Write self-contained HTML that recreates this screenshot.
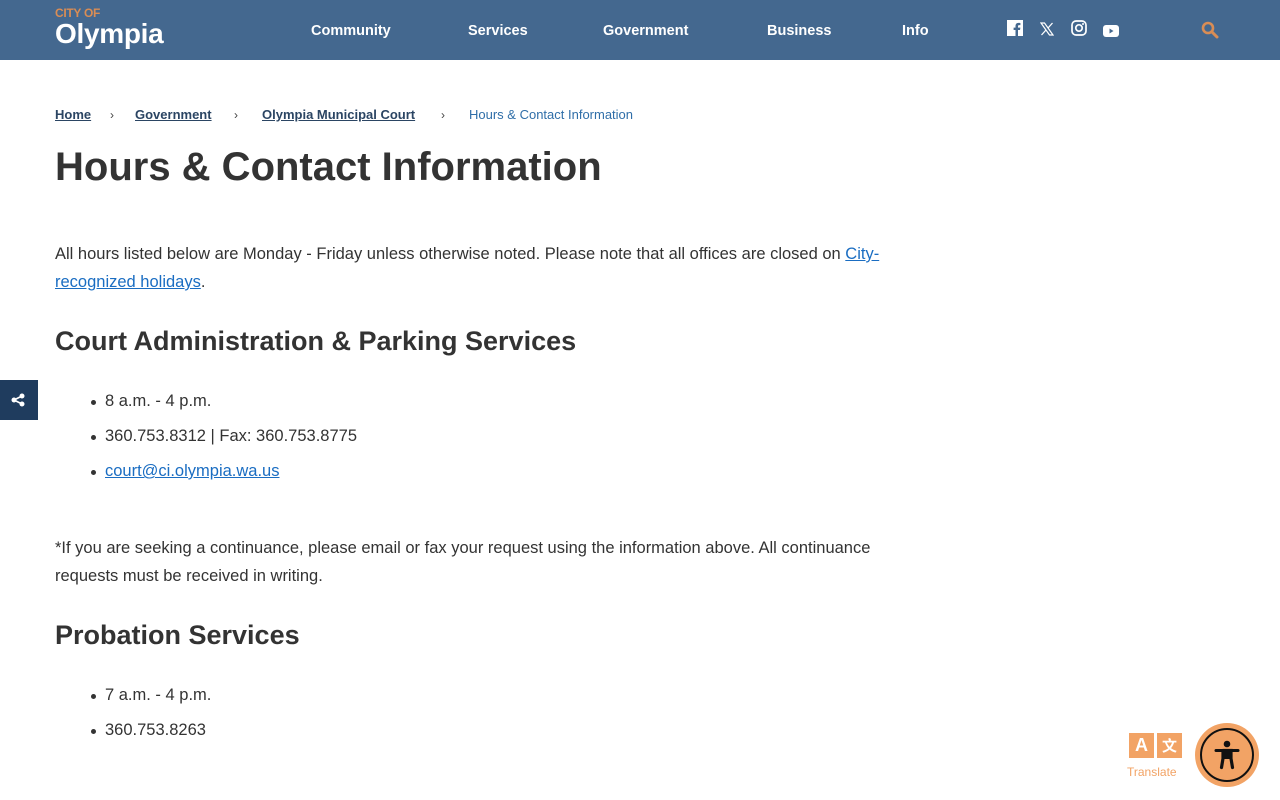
<!DOCTYPE html>
<html><head><meta charset="utf-8"><style>
*{margin:0;padding:0;box-sizing:border-box}
body{width:1280px;height:800px;overflow:hidden;background:#fff;font-family:"Liberation Sans",sans-serif;color:#333;position:relative}
.hdr{position:absolute;left:0;top:0;width:1280px;height:60px;background:#44688f}
.city{position:absolute;left:55px;top:6px;color:#d98d55;font-size:12px;font-weight:bold;letter-spacing:-0.3px}
.oly{position:absolute;left:55px;top:18px;color:#fff;font-size:28px;font-weight:bold;letter-spacing:-0.3px}
.nav{position:absolute;top:23px;color:#fff;font-size:14.5px;font-weight:bold}
.abs{position:absolute}
.bc{position:absolute;top:107px;font-size:13px;white-space:nowrap}
.bc a{color:#2b4563;font-weight:bold;text-decoration:underline}
.sep{position:absolute;top:108px;font-size:12px;color:#444}
h1{position:absolute;left:55px;top:145px;font-size:40px;font-weight:bold;color:#333;white-space:nowrap}
h2{position:absolute;left:55px;font-size:27px;font-weight:bold;color:#333;white-space:nowrap}
p{position:absolute;left:55px;font-size:16.5px;line-height:28px;white-space:nowrap;color:#333}
a.l{color:#1a6dc2;text-decoration:underline}
.li{position:absolute;left:105px;font-size:16.5px;white-space:nowrap}
.li:before{content:"";position:absolute;left:-14px;top:8px;width:5px;height:5px;border-radius:50%;background:#333}
</style></head><body>
<div class="hdr">
<div class="city">CITY OF</div>
<div class="oly">Olympia</div>
<div class="nav" style="left:311px">Community</div>
<div class="nav" style="left:468px">Services</div>
<div class="nav" style="left:603px">Government</div>
<div class="nav" style="left:767px">Business</div>
<div class="nav" style="left:902px">Info</div>
<svg class="abs" style="left:1007px;top:20px" width="16" height="16" viewBox="0 0 16 16"><rect width="16" height="16" fill="#fff"/><path d="M11 16V10h2l.4-2.4H11V6.2c0-.7.3-1.1 1.1-1.1h1.3V3c-.4 0-1.1-.1-1.9-.1-1.9 0-3 1.1-3 3.1v1.6H6.6V10h1.9v6z" fill="#44688f"/></svg>
<svg class="abs" style="left:1040px;top:22px" width="14" height="14" viewBox="0 0 14 14"><path d="M1 1h3.5l8.5 12H9.5z" fill="none" stroke="#fff" stroke-width="1.2"/><path d="M12.5 1L8 6M1.5 13L6 8" stroke="#fff" stroke-width="1.3"/></svg>
<svg class="abs" style="left:1071px;top:20px" width="16" height="16" viewBox="0 0 16 16"><rect x="1" y="1" width="14" height="14" rx="4" fill="none" stroke="#fff" stroke-width="1.7"/><circle cx="8" cy="8" r="3.2" fill="none" stroke="#fff" stroke-width="1.7"/><circle cx="12" cy="4" r="1" fill="#fff"/></svg>
<svg class="abs" style="left:1103px;top:25px" width="16" height="12" viewBox="0 0 16 12"><rect width="16" height="12" rx="3" fill="#fff"/><path d="M6.5 3.5v5l4-2.5z" fill="#44688f"/></svg>
<svg class="abs" style="left:1201px;top:21px" width="18" height="18" viewBox="0 0 18 18"><circle cx="7" cy="7" r="5" fill="none" stroke="#d98d55" stroke-width="2.6"/><path d="M11 11l5 5" stroke="#d98d55" stroke-width="3" stroke-linecap="round"/></svg>
</div>
<div class="bc" style="left:55px"><a>Home</a></div>
<div class="sep" style="left:110px">›</div>
<div class="bc" style="left:135px"><a>Government</a></div>
<div class="sep" style="left:234px">›</div>
<div class="bc" style="left:262px"><a>Olympia Municipal Court</a></div>
<div class="sep" style="left:441px">›</div>
<div class="bc" style="left:469px;color:#2f6ea8">Hours &amp; Contact Information</div>
<h1>Hours &amp; Contact Information</h1>
<p style="top:240px">All hours listed below are Monday - Friday unless otherwise noted. Please note that all offices are closed on <a class="l">City-</a><br><a class="l">recognized holidays</a>.</p>
<h2 style="top:326px">Court Administration &amp; Parking Services</h2>
<div class="li" style="top:392px">8 a.m. - 4 p.m.</div>
<div class="li" style="top:427px">360.753.8312 | Fax: 360.753.8775</div>
<div class="li" style="top:462px"><a class="l">court@ci.olympia.wa.us</a></div>
<p style="top:534px">*If you are seeking a continuance, please email or fax your request using the information above. All continuance<br>requests must be received in writing.</p>
<h2 style="top:620px">Probation Services</h2>
<div class="li" style="top:686px">7 a.m. - 4 p.m.</div>
<div class="li" style="top:721px">360.753.8263</div>
<div class="abs" style="left:0;top:380px;width:38px;height:40px;background:#1f3c5e"></div>
<svg class="abs" style="left:11px;top:393px" width="14" height="14" viewBox="0 0 14 14"><circle cx="3" cy="7" r="2.5" fill="#fff"/><circle cx="11" cy="3" r="2.5" fill="#fff"/><circle cx="11" cy="11" r="2.5" fill="#fff"/><path d="M3 7L11 3M3 7l8 4" stroke="#fff" stroke-width="1.6"/></svg>
<div class="abs" style="left:1129px;top:733px;width:25px;height:25px;background:#f2a365;color:#fff;font-weight:bold;font-size:18px;text-align:center;line-height:25px">A</div>
<div class="abs" style="left:1157px;top:733px;width:25px;height:25px;background:#f2a365;color:#fff;font-weight:bold;font-size:15px;text-align:center;line-height:25px;font-family:'Noto Sans CJK SC',sans-serif">文</div>
<div class="abs" style="left:1127px;top:765px;font-size:12px;color:#f2a365">Translate</div>
<div class="abs" style="left:1195px;top:723px;width:64px;height:64px;border-radius:50%;background:#f2a365"></div>
<div class="abs" style="left:1200px;top:728px;width:54px;height:54px;border-radius:50%;border:2.5px solid #111"></div>
<svg class="abs" style="left:1211px;top:739px" width="32" height="32" viewBox="0 0 32 32"><circle cx="16" cy="5" r="3.3" fill="#111"/><path d="M5 11.5h22" stroke="#111" stroke-width="3" stroke-linecap="round"/><path d="M12 11.5h8v8l1.5 9M12 19.5l-1.5 9M12 11.5v8" stroke="#111" stroke-width="3.2" stroke-linecap="round" fill="none"/><rect x="12" y="11" width="8" height="9" fill="#111"/></svg>
</body></html>
